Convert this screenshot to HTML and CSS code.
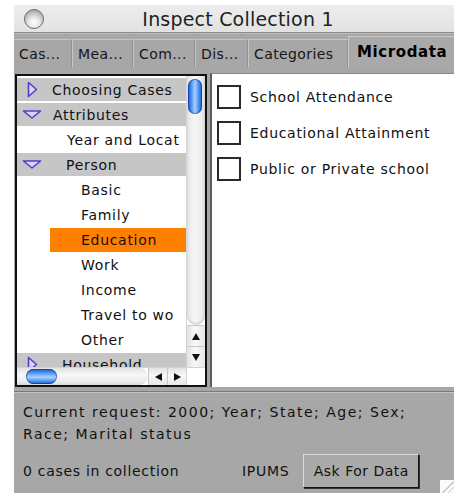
FILE: index.html
```html
<!DOCTYPE html>
<html lang="en">
<head>
<meta charset="utf-8">
<title>Inspect Collection 1</title>
<link rel="stylesheet" href="styles.css">
</head>
<body>
<div class="window">
  <header class="titlebar">
    <span class="close"></span>
    <h1 class="title">Inspect Collection 1</h1>
  </header>

  <nav class="tabs">
    <span class="tab">Cas...</span>
    <span class="tab">Mea...</span>
    <span class="tab">Com...</span>
    <span class="tab">Dis...</span>
    <span class="tab">Categories</span>
    <span class="tab tab-active">Microdata</span>
  </nav>

  <main class="content">
    <section class="outline">
      <ul class="tree">
        <li class="row row-group">
          <svg class="tri tri-right" width="11" height="17" viewBox="0 0 11 17"><polygon points="1.5,1.5 9.5,8.5 1.5,15.5" fill="#d9d4ff" stroke="#4d43c4" stroke-width="1.6" stroke-linejoin="round"/></svg>
          <span class="label lvl0">Choosing Cases</span>
        </li>
        <li class="row row-group">
          <svg class="tri tri-down" width="20" height="9" viewBox="0 0 20 9"><polygon points="1.5,1 18.5,1 10,8" fill="#d9d4ff" stroke="#4d43c4" stroke-width="1.6" stroke-linejoin="round"/></svg>
          <span class="label lvl0b">Attributes</span>
        </li>
        <li class="row"><span class="label lvl1">Year and Locat</span></li>
        <li class="row row-group">
          <svg class="tri tri-down" width="20" height="9" viewBox="0 0 20 9"><polygon points="1.5,1 18.5,1 10,8" fill="#d9d4ff" stroke="#4d43c4" stroke-width="1.6" stroke-linejoin="round"/></svg>
          <span class="label lvl1">Person</span>
        </li>
        <li class="row"><span class="label lvl2">Basic</span></li>
        <li class="row"><span class="label lvl2">Family</span></li>
        <li class="row"><span class="label lvl2 selected">Education</span></li>
        <li class="row"><span class="label lvl2">Work</span></li>
        <li class="row"><span class="label lvl2">Income</span></li>
        <li class="row"><span class="label lvl2">Travel to wo</span></li>
        <li class="row"><span class="label lvl2">Other</span></li>
        <li class="row row-group">
          <svg class="tri tri-right" width="11" height="17" viewBox="0 0 11 17"><polygon points="1.5,1.5 9.5,8.5 1.5,15.5" fill="#d9d4ff" stroke="#4d43c4" stroke-width="1.6" stroke-linejoin="round"/></svg>
          <span class="label lvl1">Household</span>
        </li>
      </ul>

      <div class="vscroll">
        <div class="vtrack"><span class="vthumb"></span></div>
        <span class="arrow arrow-up"></span>
        <span class="arrow arrow-down"></span>
      </div>

      <div class="hscroll">
        <div class="htrack"><span class="hthumb"></span></div>
        <span class="arrow arrow-left"></span>
        <span class="arrow arrow-right"></span>
      </div>

      <div class="corner"></div>
    </section>

    <section class="fields">
      <label class="field"><span class="box"></span>School Attendance</label>
      <label class="field"><span class="box"></span>Educational Attainment</label>
      <label class="field"><span class="box"></span>Public or Private school</label>
    </section>
  </main>

  <footer class="status">
    <p class="request">Current request: 2000; Year; State; Age; Sex;<br>Race; Marital status</p>
    <div class="actions">
      <span class="count">0 cases in collection</span>
      <span class="source">IPUMS</span>
      <button class="ask">Ask For Data</button>
    </div>
    <span class="grip"></span>
  </footer>
</div>
</body>
</html>
```

FILE: styles.css
```css
html, body {
  margin: 0;
  padding: 0;
  background: #ffffff;
  overflow: hidden;
}

body {
  font-family: "DejaVu Sans", Verdana, sans-serif;
  font-size: 14px;
  letter-spacing: 0.7px;
  color: #111;
}

.window {
  margin: 5px 0 0 14px;
  width: 440px;
  height: 488px;
  display: flex;
  flex-direction: column;
  background: #a7a7a7;
}

/* ---------- title bar ---------- */
.titlebar {
  height: 27px;
  flex: none;
  display: flex;
  align-items: center;
  background: linear-gradient(#ededed, #e2e2e2);
  border-bottom: 1px solid #8c8c8c;
}

.close {
  flex: none;
  width: 20px;
  height: 20px;
  margin-left: 10px;
  box-sizing: border-box;
  border-radius: 50%;
  border: 1px solid #6c6c6c;
  background: radial-gradient(circle at 50% 70%, #ffffff 0, #e6e6e6 35%, #a9a9a9 80%, #8a8a8a 100%);
}

.title {
  margin: 0;
  flex: 1;
  text-align: center;
  font-size: 19px;
  font-weight: normal;
  letter-spacing: 0.2px;
  color: #222;
  padding-right: 22px;
}

/* ---------- tabs ---------- */
.tabs {
  flex: none;
  height: 34px;
  display: grid;
  grid-template-columns: 58px 61px 62px 53px 100px 1fr;
  align-items: end;
  background: #a7a7a7;
  border-top: 1px solid #bdbdbd;
  box-sizing: border-box;
}

.tab {
  height: 28px;
  box-sizing: border-box;
  display: flex;
  align-items: center;
  padding-left: 5px;
  font-size: 14px;
  letter-spacing: 0.4px;
  color: #161616;
  border-left: 1px solid #c6c6c6;
  border-right: 1px solid #8f8f8f;
  border-top: 1px solid #c6c6c6;
  white-space: nowrap;
  overflow: hidden;
}

.tab:first-child {
  border-left: none;
}

.tab-active {
  height: 31px;
  font-weight: bold;
  font-size: 15px;
  letter-spacing: 0.6px;
  padding-left: 8px;
  color: #000;
  background: #a9a9a9;
  border-color: #cdcdcd;
  border-right: none;
}

/* ---------- main split ---------- */
.content {
  flex: none;
  height: 325px;
  display: flex;
  gap: 3px;
  padding: 6px 0 4px 1px;
  box-sizing: border-box;
  border-bottom: 1px solid #7a7a7a;
}

.outline {
  width: 192px;
  flex: none;
  box-sizing: border-box;
  border: 2px solid #111;
  background: #fff;
  display: grid;
  grid-template-columns: 1fr 19px;
  grid-template-rows: 1fr 18px;
  overflow: hidden;
  margin-top: 1px;
}

.tree {
  list-style: none;
  margin: 0;
  padding: 1px 0 0 0;
  overflow: hidden;
  grid-column: 1;
  grid-row: 1 / 3;
}

.row {
  height: 25px;
  display: flex;
  align-items: center;
  white-space: nowrap;
  box-sizing: border-box;
}

.row-group {
  background: #c6c6c6;
  border-top: 1px solid #fff;
  border-bottom: 1px solid #fff;
}

.label {
  display: flex;
  align-items: center;
  height: 100%;
  box-sizing: border-box;
}

.lvl0 { padding-left: 14px; }
.lvl0b { padding-left: 11px; }
.lvl1 { padding-left: 50px; }
.lvl2 { margin-left: 33px; padding-left: 31px; flex: 1; }

.row-group .lvl1 { padding-left: 24px; }

.selected {
  background: #ff8000;
  height: 24px;
}

/* disclosure triangles */
.tri {
  flex: none;
  display: block;
}

.tri-right { margin-left: 10px; }
.tri-down { margin-left: 5px; }

/* vertical scroller */
.vscroll {
  grid-column: 2;
  grid-row: 1;
  display: flex;
  flex-direction: column;
  background: #fff;
  border-left: 1px solid #d4d4d4;
  z-index: 1;
}

.vtrack {
  flex: 1;
  background: linear-gradient(90deg, #e4e4e4, #f7f7f7 40%, #ececec 80%, #d8d8d8);
  border-radius: 0 0 9px 9px;
  padding-top: 3px;
  box-shadow: inset 0 -2px 2px rgba(0,0,0,0.12);
}

.vthumb {
  display: block;
  width: 14px;
  height: 35px;
  margin-left: 1px;
  border-radius: 7px;
  background: linear-gradient(90deg, #1b57c4 0%, #4f94f2 25%, #a8d2ff 50%, #4f94f2 75%, #1b57c4 100%);
  box-shadow: inset 0 0 0 1px rgba(0,40,140,0.5);
}

.arrow {
  flex: none;
  display: flex;
  align-items: center;
  justify-content: center;
  background: linear-gradient(90deg, #e2e2e2, #f8f8f8 45%, #e6e6e6);
}

.arrow::before {
  content: "";
  width: 0;
  height: 0;
  border: 4px solid transparent;
}

.arrow-up, .arrow-down {
  height: 20px;
  border-top: 1px solid #c8c8c8;
}

.arrow-up::before { border-bottom: 7px solid #111; border-top-width: 0; }
.arrow-down::before { border-top: 7px solid #111; border-bottom-width: 0; }

/* horizontal scroller */
.hscroll {
  grid-column: 1;
  grid-row: 2;
  display: flex;
  background: #fff;
  border-top: 1px solid #d4d4d4;
  z-index: 1;
}

.htrack {
  flex: 1;
  background: linear-gradient(#e2e2e2, #f7f7f7 40%, #ececec 80%, #d6d6d6);
  border-radius: 0 9px 9px 0;
  padding-left: 9px;
  display: flex;
  align-items: center;
}

.hthumb {
  display: block;
  width: 31px;
  height: 15px;
  border-radius: 8px;
  background: linear-gradient(#1b57c4 0%, #4f94f2 25%, #a8d2ff 55%, #4f94f2 80%, #1b57c4 100%);
  box-shadow: inset 0 0 0 1px rgba(0,40,140,0.5);
}

.arrow-left, .arrow-right {
  width: 18px;
  border-left: 1px solid #c8c8c8;
  background: linear-gradient(#e2e2e2, #f8f8f8 45%, #e6e6e6);
}

.arrow-left::before { border-right: 7px solid #111; border-left-width: 0; }
.arrow-right::before { border-left: 7px solid #111; border-right-width: 0; }

.corner {
  grid-column: 2;
  grid-row: 2;
  background: #fff;
  border-top: 1px solid #d4d4d4;
  border-left: 1px solid #d4d4d4;
  z-index: 1;
}

/* ---------- checkbox pane ---------- */
.fields {
  flex: 1;
  background: #fff;
  border-left: 2px solid #5c5c5c;
  border-top: 1px solid #8a8a8a;
  display: flex;
  flex-direction: column;
  gap: 11px;
  padding: 10px 0 0 5px;
}

.field {
  display: flex;
  align-items: center;
  gap: 9px;
  height: 25px;
  white-space: nowrap;
}

.box {
  width: 24px;
  height: 24px;
  box-sizing: border-box;
  border: 2px solid #2a2a2a;
  background: #fff;
  flex: none;
}

/* ---------- status area ---------- */
.status {
  flex: 1;
  position: relative;
  padding: 8px 0 0 9px;
  border-top: 1px solid #c2c2c2;
  background: #a7a7a7;
}

.request {
  margin: 0;
  line-height: 22px;
  letter-spacing: 1.5px;
  color: #111;
}

.actions {
  display: flex;
  align-items: center;
  margin-top: 9px;
}

.count {
  width: 219px;
  flex: none;
}

.ask {
  margin-left: 14px;
  height: 34px;
  width: 116px;
  font-family: inherit;
  font-size: 14px;
  letter-spacing: 0.5px;
  color: #111;
  background: #a9a9a9;
  border: 1px solid #111;
  border-top-color: #dcdcdc;
  border-left-color: #dcdcdc;
  box-shadow: 1px 1px 0 #333;
  padding: 0;
}

.grip {
  position: absolute;
  right: 0;
  bottom: 0;
  width: 14px;
  height: 13px;
  background: linear-gradient(135deg, #fafafa 0 55%, #c8c8c8 55% 60%, #fafafa 60% 75%, #c8c8c8 75% 80%, #fafafa 80%);
}
```
